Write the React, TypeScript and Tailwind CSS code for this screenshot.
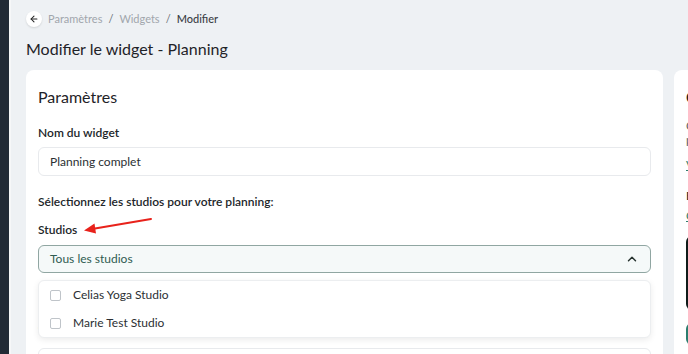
import { ArrowLeft, ChevronUp } from "lucide-react";

const studios = ["Celias Yoga Studio", "Marie Test Studio"];

function Breadcrumb() {
  return (
    <div className="flex h-4 items-center gap-1.5 text-[11px]">
      <button
        type="button"
        className="flex h-4 w-4 items-center justify-center rounded-full bg-white shadow-[0_1px_2px_rgba(0,0,0,0.12)]"
      >
        <ArrowLeft className="h-2.5 w-2.5 text-[#222]" strokeWidth={2.5} />
      </button>
      <span className="text-[#a1a6ac]">Paramètres</span>
      <span className="text-[#6b7178]">/</span>
      <span className="text-[#a1a6ac]">Widgets</span>
      <span className="text-[#6b7178]">/</span>
      <span className="font-medium text-[#3b4046]">Modifier</span>
    </div>
  );
}

function StudioDropdown() {
  return (
    <div className="absolute left-0 right-0 top-[35px] z-10 rounded-md border border-[#eceef0] bg-white shadow-[0_2px_6px_rgba(0,0,0,0.08)]">
      {studios.map((studio) => (
        <div key={studio} className="flex h-7 items-center gap-3 px-[11px] text-[12px] text-[#2b2f33]">
          <span className="h-[11px] w-[11px] rounded-[2px] border border-[#bfc4c9] bg-white" />
          {studio}
        </div>
      ))}
    </div>
  );
}

function SettingsCard() {
  return (
    <section className="relative h-[300px] w-[637px] shrink-0 rounded-lg bg-white px-3 pt-[15px]">
      <h2 className="h-6 text-[16px] leading-6 text-[#1f2328]">Paramètres</h2>

      <label className="mt-4 block h-4 text-[12px] font-semibold leading-4 text-[#22262a]">
        Nom du widget
      </label>
      <div className="mt-1.5 flex h-[29px] items-center rounded-md border border-[#e8eaed] px-[11px] text-[12px] text-[#2b2f33]">
        Planning complet
      </div>

      <p className="mt-[18px] h-4 text-[12px] font-semibold leading-4 text-[#22262a]">
        Sélectionnez les studios pour votre planning:
      </p>

      <label className="mt-3 block h-4 text-[12px] font-semibold leading-4 text-[#22262a]">
        Studios
      </label>
      <div className="relative mt-[7px]">
        <div className="flex h-7 items-center justify-between rounded-md border border-[#90a6a2] bg-[#f5f9f9] px-[11px] text-[12px] text-[#2f5c51]">
          Tous les studios
          <ChevronUp className="h-3.5 w-3.5 text-[#27332f]" strokeWidth={2.5} />
        </div>
        <StudioDropdown />
      </div>

      <label className="mt-[47px] block h-4 text-[12px] font-semibold leading-4 text-[#22262a]">
        Couleur principale
      </label>
      <div className="mt-3 h-[29px] rounded-md border border-[#e8eaed]" />

      <svg
        className="pointer-events-none absolute left-0 top-0 z-20"
        width="200"
        height="200"
        viewBox="0 0 200 200"
      >
        <line x1="125" y1="149" x2="66" y2="159" stroke="#e8221b" strokeWidth="2" strokeLinecap="round" />
        <path d="M58 160.5 L68.5 153.5 L70 163.5 Z" fill="#e8221b" />
      </svg>
    </section>
  );
}

function EmbedCard() {
  return (
    <section className="h-[300px] w-[300px] shrink-0 rounded-lg bg-white px-3 pt-[15px] text-[12px]">
      <h2 className="h-6 text-[15px] font-semibold leading-6 text-[#1f2328]">Code d'intégration</h2>
      <p className="mt-[10px] leading-[14px] text-[#5d6369]">
        Copiez ce code et collez-le dans votre site web
        <br />
        pour afficher votre planning.
      </p>
      <a className="mt-[10px] block leading-4 text-[#2f7d6c] underline">Voir l'aperçu</a>
      <p className="mt-[15px] leading-4 font-medium text-[#22262a]">Besoin d'aide ?</p>
      <a className="mt-1 block leading-4 text-[#2f7d6c] underline">Guide d'installation</a>
      <div className="mt-3 h-[74px] rounded-md bg-[#0f1b19]" />
      <button type="button" className="mt-[13px] h-[22px] w-[120px] rounded-md bg-[#2a7d6e]" />
    </section>
  );
}

export default function App() {
  return (
    <div
      className="flex h-[354px] w-[688px] overflow-hidden bg-[#eef1f4]"
      style={{ fontFamily: "Lato, Inter, 'Noto Sans', sans-serif" }}
    >
      <aside className="w-[11px] shrink-0 border-r-2 border-[#f6f7f8] bg-[#222b36]" />
      <main className="min-w-0 flex-1 pl-[15px] pt-[11px]">
        <Breadcrumb />
        <h1 className="mt-[10px] h-6 text-[16px] leading-6 text-[#1f2328]">
          Modifier le widget - Planning
        </h1>
        <div className="mt-[9px] flex gap-[11px]">
          <SettingsCard />
          <EmbedCard />
        </div>
      </main>
    </div>
  );
}
